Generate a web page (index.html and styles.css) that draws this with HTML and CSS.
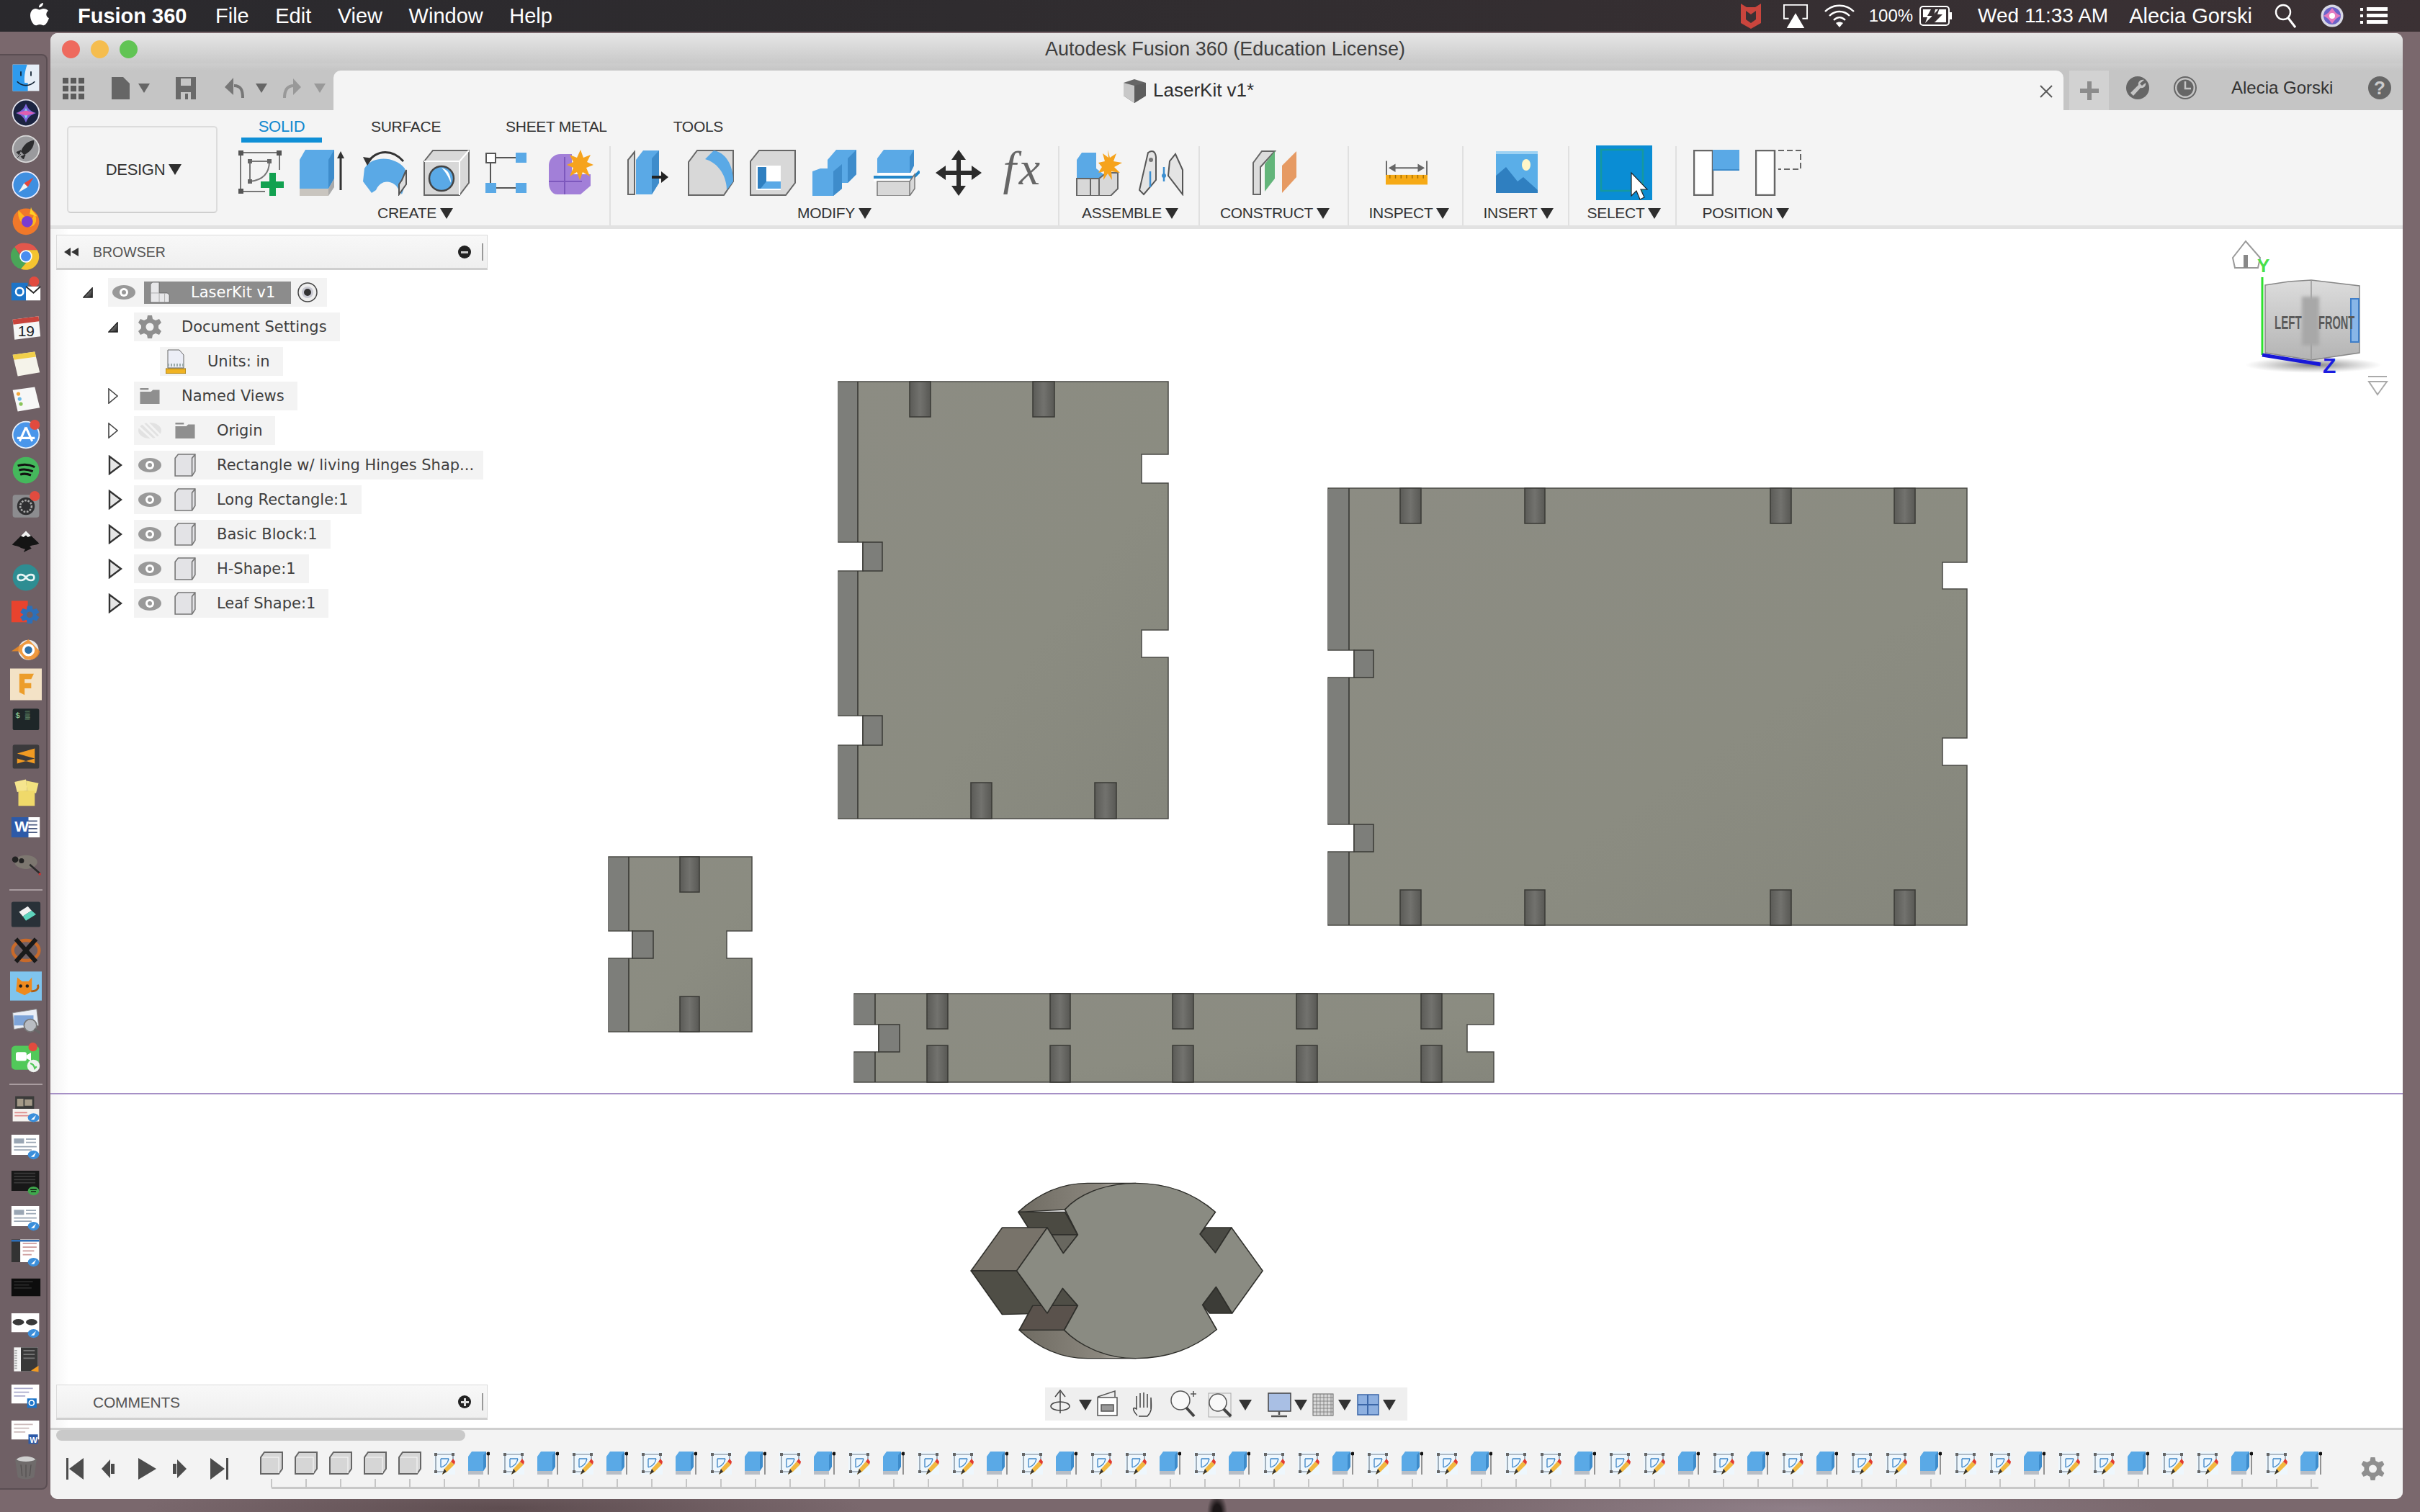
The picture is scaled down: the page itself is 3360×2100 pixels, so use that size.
FILE: index.html
```html
<!DOCTYPE html>
<html lang="en">
<head>
<meta charset="utf-8">
<title>Autodesk Fusion 360</title>
<link rel="stylesheet" href="styles.css">
</head>
<body>
<svg class="defs" aria-hidden="true">
<defs>
<linearGradient id="slotg" x1="0" x2="1" y1="0" y2="0"><stop offset="0" stop-color="#5b5b57"/><stop offset=".5" stop-color="#72726e"/><stop offset="1" stop-color="#585854"/></linearGradient>
<linearGradient id="capg" x1="0" x2="1" y1="0" y2="0"><stop offset="0" stop-color="#6f6b62"/><stop offset=".7" stop-color="#8b877e"/><stop offset="1" stop-color="#d8d6d0"/></linearGradient>
<linearGradient id="cubeg" x1="0" x2="0" y1="0" y2="1"><stop offset="0" stop-color="#dcdcdc"/><stop offset="1" stop-color="#b4b4b4"/></linearGradient>
<linearGradient id="bodyg" x1="0" x2="1" y1="0" y2="1"><stop offset="0" stop-color="#8c8c83"/><stop offset=".6" stop-color="#8b8c81"/><stop offset="1" stop-color="#85867c"/></linearGradient>
<radialGradient id="shadowg"><stop offset="0" stop-color="#555" stop-opacity=".75"/><stop offset="1" stop-color="#888" stop-opacity="0"/></radialGradient>
</defs>
<symbol id="r-sketch" viewBox="0 0 64 64"><path d="M4 4H58M4 4V58M4 58H38M58 4V28" stroke="#777" stroke-width="2" fill="none"/><path d="M1 1h7v7H1zM54 1h7v7h-7zM1 54h7v7H1z" fill="#555"/><path d="M17 16H44M17 16V44M44 16C44 32 36 42 17 44" stroke="#777" stroke-width="2" fill="none"/><path d="M14 13h6v6h-6zM41 13h6v6h-6zM14 41h6v6h-6z" fill="#666"/><path d="M44 32h9v12h11v9H53v11h-9V53H32v-9h12z" fill="#12a150"/></symbol>
<symbol id="r-extrude" viewBox="0 0 64 64"><path d="M0 54V14L8 0H48V40L40 54Z" fill="#5aa9e6"/><path d="M40 54V14L48 0V40Z" fill="#3e8ccb"/><path d="M0 54H40V64H0Z" fill="#c9c5bf"/><path d="M40 54l8-14v12l-8 12z" fill="#aaa"/><path d="M57 56V6" stroke="#333" stroke-width="3"/><path d="M52 12l5-10 5 10z" fill="#333"/></symbol>
<symbol id="r-revolve" viewBox="0 0 64 64"><path d="M4 26C14 8 46 8 60 26L62 44 56 62 48 50C40 42 26 42 20 56L14 60 2 44Z" fill="#5aa9e6"/><path d="M56 42L62 28V48L52 62V48Z" fill="#ddd" stroke="#555" stroke-width="2"/><path d="M8 18C22 -2 44 0 58 16" stroke="#333" stroke-width="3" fill="none"/><path d="M2 10l13 2-7 10z" fill="#333"/></symbol>
<symbol id="r-hole" viewBox="0 0 64 64"><path d="M1 63V16L13 1H63V46L50 63Z" fill="#d8d8d8" stroke="#666" stroke-width="2"/><path d="M1 16H50V63M50 16L63 1" fill="none" stroke="#fff" stroke-width="2"/><circle cx="25" cy="40" r="17" fill="#5aa9e6" stroke="#444" stroke-width="2.5"/><path d="M25 25C36 28 38 38 38 46 34 36 30 30 25 25" fill="#fff"/></symbol>
<symbol id="r-pattern" viewBox="0 0 64 64"><rect x="1" y="5" width="13" height="13" fill="#fff" stroke="#555" stroke-width="2"/><rect x="42" y="4" width="15" height="14" fill="#5aa9e6"/><rect x="0" y="46" width="15" height="14" fill="#5aa9e6"/><rect x="42" y="46" width="15" height="14" fill="#5aa9e6"/><path d="M14 11H42M7 18V46M15 53H42" stroke="#555" stroke-width="2"/></symbol>
<symbol id="r-form" viewBox="0 0 64 64"><path d="M2 22C2 12 10 6 18 6H34V34H60V50L46 62H14C6 62 2 54 2 46Z" fill="#a27fd8"/><path d="M2 44H48M24 10V62" stroke="#7d58bd" stroke-width="2"/><path d="M46 0l4 11 10-4-5 10 9 4-10 4 5 12-10-6-4 11-4-11-10 6 5-12-9-4 9-4-5-10 10 4z" fill="#f6a31c"/></symbol>
<symbol id="r-press" viewBox="0 0 64 64"><path d="M12 3L3 14V62H12Z" fill="#dcdcdc" stroke="#666" stroke-width="2"/><path d="M14 62V14L24 1H46V46L36 62Z" fill="#5aa9e6"/><path d="M36 62V12L46 1V46Z" fill="#3e8ccb"/><path d="M36 38H54" stroke="#222" stroke-width="4"/><path d="M49 30l10 8-10 8z" fill="#222"/></symbol>
<symbol id="r-fillet" viewBox="0 0 64 64"><path d="M1 63V17L13 1H63V44L50 63Z" fill="#d8d8d8" stroke="#666" stroke-width="2"/><path d="M24 13L36 1C52 4 63 20 63 44L54 56C54 36 42 18 24 13Z" fill="#5aa9e6"/></symbol>
<symbol id="r-shell" viewBox="0 0 64 64"><path d="M1 63V16L13 1H63V46L50 63Z" fill="#d8d8d8" stroke="#666" stroke-width="2"/><rect x="9" y="22" width="34" height="34" fill="#fff"/><path d="M11 24h12v20h20v10H11z" fill="#2f7fc0"/><path d="M23 44h20v10H15z" fill="#5aa9e6"/></symbol>
<symbol id="r-combine" viewBox="0 0 64 64"><path d="M22 26V14L34 0H62V34L50 46H42V54L30 64H1V30L12 26Z" fill="#5aa9e6"/><path d="M50 46V12L62 0V34ZM30 64V30L42 20V54Z" fill="#3e8ccb"/></symbol>
<symbol id="r-offset" viewBox="0 0 64 64"><path d="M5 32V12L14 0H56V22L50 34Z" fill="#5aa9e6"/><path d="M50 34V10L56 0V22Z" fill="#3e8ccb"/><path d="M0 42L8 32H64V34L54 44H0Z" fill="#fff"/><path d="M0 38H56L64 30" stroke="#2487c9" stroke-width="4" fill="none"/><path d="M5 64V44H50V64ZM50 64V44L57 34V54Z" fill="#d8d8d8" stroke="#777" stroke-width="1.5"/></symbol>
<symbol id="r-move" viewBox="0 0 64 64"><path d="M32 8V56M8 32H56" stroke="#2b2b2b" stroke-width="6"/><path d="M32 0l10 14H22zM32 64l10-14H22zM0 32l14-10v20zM64 32l-14-10v20z" fill="#2b2b2b"/></symbol>
<symbol id="r-newc" viewBox="0 0 64 64"><path d="M1 32V14L8 4H28V26L38 34V64H1Z" fill="#5aa9e6"/><path d="M1 40H32V64H1ZM32 40l10-8h16V54L48 64H32Z" fill="#d8d8d8" stroke="#666" stroke-width="2"/><path d="M20 64V40" stroke="#666" stroke-width="2"/><path d="M44 0l3 11 9-6-4 11 12 2-11 6 8 8-12-2 1 12-6-9-6 9 1-12-8 2 5-8-5-6 9-2-3-11 8 6z" fill="#f6a31c"/></symbol>
<symbol id="r-joint" viewBox="0 0 64 64"><path d="M2 56L14 4C20 0 24 2 25 10V42L8 62Z" fill="#e4e4e4" stroke="#555" stroke-width="2"/><path d="M42 36L62 62V28L52 6 44 16Z" fill="#e4e4e4" stroke="#555" stroke-width="2"/><circle cx="18" cy="14" r="3" fill="#777"/><path d="M17 30V52M36 24V44" stroke="#3b8ed0" stroke-width="2.5"/><circle cx="36" cy="36" r="3" fill="#3b8ed0"/></symbol>
<symbol id="r-construct" viewBox="0 0 64 64"><path d="M2 62V18L14 2H32L12 24V62Z" fill="#dcdcdc" stroke="#666" stroke-width="2"/><path d="M18 58V20L32 2V40Z" fill="#63b57a"/><path d="M42 60V22L62 2V38Z" fill="#e69a63"/></symbol>
<symbol id="r-inspect" viewBox="0 0 60 34"><path d="M1 0V22M59 0V22M6 10H54" stroke="#666" stroke-width="2"/><path d="M4 10l10-6v12zM56 10l-10-6v12z" fill="#666"/><rect x="0" y="20" width="60" height="14" fill="#f6aa16"/><path d="M6 20v5M14 20v5M22 20v5M30 20v5M38 20v5M46 20v5M54 20v5" stroke="#a36e00" stroke-width="1.5"/></symbol>
<symbol id="r-insert" viewBox="0 0 58 58"><rect width="58" height="58" fill="#5aaee8"/><rect width="58" height="4" fill="#9ed2f3"/><ellipse cx="42" cy="19" rx="6" ry="8" fill="#fff6c8"/><path d="M0 58V34L14 22 30 42 38 36 58 54V58Z" fill="#2f7fc0"/></symbol>
<symbol id="r-select" viewBox="0 0 78 76"><rect width="78" height="76" fill="#0a8dd4"/><rect x="7" y="6" width="58" height="57" fill="none" stroke="#15999f" stroke-width="2.5"/><path d="M49 38V70L56 63 61 75 67 72 62 61H71Z" fill="#fff" stroke="#222" stroke-width="1.2"/></symbol>
<symbol id="r-pos1" viewBox="0 0 64 64"><rect x="1" y="1" width="26" height="62" fill="#fff" stroke="#666" stroke-width="2.5"/><rect x="27" y="0" width="37" height="28" fill="#5aa9e6"/><path d="M27 28H64" stroke="#3e8ccb" stroke-width="2"/></symbol>
<symbol id="r-pos2" viewBox="0 0 64 64"><rect x="1" y="1" width="26" height="62" fill="#fff" stroke="#666" stroke-width="2.5"/><path d="M32 1H63V27H32" fill="none" stroke="#666" stroke-width="2" stroke-dasharray="8 4"/></symbol>
<symbol id="b-eye" viewBox="0 0 32 20"><ellipse cx="16" cy="10" rx="16" ry="10" fill="#999"/><circle cx="16" cy="10" r="6" fill="#fff"/><circle cx="16" cy="10" r="3" fill="#999"/></symbol>
<symbol id="b-eyeoff" viewBox="0 0 32 28"><ellipse cx="16" cy="14" rx="16" ry="11" fill="#e2e2e2"/><path d="M4 2L28 26M0 8L22 28M10 0L32 22" stroke="#f4f4f4" stroke-width="3"/></symbol>
<symbol id="b-gear" viewBox="0 0 32 32"><path d="M13 0h6l1 5 4 2 5-2 3 5-4 4v4l4 4-3 5-5-2-4 2-1 5h-6l-1-5-4-2-5 2-3-5 4-4v-4L0 10l3-5 5 2 4-2z" fill="#8f8f8f"/><circle cx="16" cy="16" r="5.5" fill="#f3f3f3"/></symbol>
<symbol id="b-folder" viewBox="0 0 32 26"><path d="M0 0h14v3H0zM0 6h18l3-3h11v23H0z" fill="#8f8f8f"/></symbol>
<symbol id="b-cube" viewBox="0 0 28 30"><path d="M1 29V6L5 1H27V23L23 29Z" fill="#e3e3e6" stroke="#777" stroke-width="1.5"/><path d="M23 29V6L27 1" fill="none" stroke="#777" stroke-width="1.5"/></symbol>
<symbol id="b-open" viewBox="0 0 16 16"><defs><linearGradient id="og" x1="0" x2="1" y1="0" y2="1"><stop offset="0" stop-color="#bbb"/><stop offset="1" stop-color="#222"/></linearGradient></defs><path d="M1 15L14 1V15Z" fill="url(#og)" stroke="#222" stroke-width="1.5"/></symbol>
<symbol id="b-closed" viewBox="0 0 14 22"><path d="M1 1L13 11 1 21Z" fill="#fff" stroke="#444" stroke-width="1.6"/></symbol>
<symbol id="b-closed2" viewBox="0 0 20 28"><path d="M2 2L18 14 2 26Z" fill="#e6e6e6" stroke="#333" stroke-width="2.4"/></symbol>
<symbol id="t-s" viewBox="0 0 30 32"><rect width="30" height="32" fill="#eef7fd"/><path d="M3 4H27V14M3 4V28H16" fill="none" stroke="#6f7f90" stroke-width="1.2"/><path d="M1 2h4v4H1zM25 2h4v4h-4zM1 26h4v4H1z" fill="#666"/><path d="M10 10H21M10 10V22M21 10C20 16 17 20 10 22" fill="none" stroke="#3d85c6" stroke-width="1.3"/><path d="M12 32l3-8 9-10 5 4-10 10z" fill="#f2b83f"/><path d="M24 14l3-4 3 4-1 4z" fill="#e23b2e"/><path d="M12 32l3-8 3 4z" fill="#333"/></symbol>
<symbol id="t-e" viewBox="0 0 30 32"><path d="M0 27V7L5 0H25V21L21 27Z" fill="#5aa9e6"/><path d="M21 27V5L25 0V21Z" fill="#3e8ccb"/><path d="M0 27H21V32H0Z" fill="#b8bec6"/><path d="M28 4V32" stroke="#333" stroke-width="1"/><circle cx="28" cy="3" r="2.5" fill="#111"/></symbol>
<symbol id="t-b" viewBox="0 0 32 32"><path d="M1 31V8L6 1H31V24L26 31Z" fill="#d6d6d6" stroke="#666" stroke-width="2"/><path d="M3 8H26V30" fill="none" stroke="#eee" stroke-width="1.5"/></symbol>
<symbol id="d-thumb" viewBox="0 0 48 48"><rect x="1" y="8" width="44" height="32" fill="#fff"/><path d="M5 14h16v8H5zM24 14h16v2H24zM24 19h16v2H24zM5 26h36v2H5zM5 31h28v2H5z" fill="#9aa6b4"/><ellipse cx="36" cy="40" rx="9" ry="7" fill="#3b8fdb"/><path d="M32 43l8-7-3 7z" fill="#fff"/></symbol>
<symbol id="d-thumbd" viewBox="0 0 48 48"><rect x="1" y="8" width="44" height="32" fill="#151515"/><path d="M5 12h34M5 17h34M5 22h34M5 27h34" stroke="#3a3a3a" stroke-width="2"/><ellipse cx="36" cy="40" rx="9" ry="7" fill="#3b8fdb"/><path d="M32 43l8-7-3 7z" fill="#fff"/></symbol>
</svg>

<div class="screen">
<header class="menubar">
  <svg class="apple" viewBox="0 0 26 32"><path d="M18 0c.3 3-2.6 6.6-6 6.3C11.700 3.500 14.700.3 18 0ZM25 11c-4 2.600-3.400 8.400 1 10.200-1.300 4-4.400 10.100-7.700 10.100-1.800 0-2.800-1.200-5-1.200s-3.300 1.200-5 1.200C3.500 31.300 0 22.800 0 17.500 0 11.700 3.500 8 7.300 8c2.300 0 3.900 1.400 5.500 1.400S16.100 8 18.500 8C21 8 23.500 9 25 11Z" fill="#fff"/></svg>
  <nav class="menus">
    <span class="menu-app">Fusion 360</span><span>File</span><span>Edit</span><span>View</span><span>Window</span><span>Help</span>
  </nav>
  <div class="status">
    <svg class="st-mc" viewBox="0 0 30 36"><path d="M1 1L9 6H21L29 1V28L15 36 1 28Z" fill="#c9453d"/><path d="M8 11L15 16 22 11V23L15 28 8 23Z" fill="#3b3134"/></svg>
    <svg class="st-air" viewBox="0 0 38 36"><path d="M9 22H2V2H36V22H29" fill="none" stroke="#fff" stroke-width="2"/><path d="M19 14L32 36H6Z" fill="#fff"/></svg>
    <svg class="st-wifi" viewBox="0 0 42 32"><path d="M1 10C12 -1 30 -1 41 10M7 16C15 8 27 8 35 16M13 22C18 17 24 17 29 22" fill="none" stroke="#fff" stroke-width="2.4"/><path d="M21 32l-5-6c3-2 7-2 10 0z" fill="#fff"/></svg>
    <span class="st-pct">100%</span>
    <svg class="st-bat" viewBox="0 0 46 28"><rect x="1" y="1" width="40" height="26" rx="4" fill="none" stroke="#fff" stroke-width="2"/><rect x="42" y="9" width="3" height="10" fill="#fff"/><path d="M5 5H16L11 14H18L8 24 11 16H5ZM22 5H37V23H20L27 14H20Z" fill="#fff"/><path d="M28 3L17 15H24L19 25 32 12H25Z" fill="#3a3134"/></svg>
    <span class="st-time">Wed 11:33 AM</span>
    <span class="st-user">Alecia Gorski</span>
    <svg class="st-search" viewBox="0 0 30 34"><circle cx="12" cy="12" r="10" fill="none" stroke="#fff" stroke-width="2.4"/><path d="M19 20L29 33" stroke="#fff" stroke-width="3"/></svg>
    <svg class="st-siri" viewBox="0 0 32 32"><circle cx="16" cy="16" r="15.500" fill="#d8d8e4"/><circle cx="16" cy="16" r="12" fill="#6b63c9"/><path d="M16 5C20 10 20 12 28 16 20 20 20 22 16 27 12 22 12 20 4 16 12 12 12 10 16 5Z" fill="#e57bc0"/><circle cx="16" cy="16" r="4" fill="#fff"/></svg>
    <svg class="st-list" viewBox="0 0 38 26"><path d="M0 2h4v4H0zM0 11h4v4H0zM0 20h4v4H0zM9 1h29v5H9zM9 10h29v5H9zM9 19h29v5H9z" fill="#fff"/></svg>
  </div>
</header>

<div class="desk">
  <aside class="dock">
    <div class="di"><i class="dot"></i><svg viewBox="0 0 48 48"><rect x="3" y="3" width="42" height="42" fill="#e6eef7"/><path d="M3 3H26C22 14 21 24 22 32H27V45H3Z" fill="#2e9bee"/><path d="M16 14v7M32 14v7" stroke="#123" stroke-width="2"/><path d="M10 30C18 38 30 38 38 30" fill="none" stroke="#123" stroke-width="2"/></svg></div>
    <div class="di"><svg viewBox="0 0 48 48"><circle cx="24" cy="24" r="21" fill="#1b2340" stroke="#e5e5ee" stroke-width="2"/><path d="M24 9C28 18 30 20 40 24 30 28 28 30 24 39 20 30 18 28 8 24 18 20 20 18 24 9Z" fill="#7a62d8"/><path d="M24 16L28 24 24 33 20 24Z" fill="#7fd8f5"/><path d="M10 24L24 20 38 24 24 28Z" fill="#e05fb0"/></svg></div>
    <div class="di"><svg viewBox="0 0 48 48"><circle cx="24" cy="24" r="21" fill="#9a9a9d" stroke="#d9d9d9" stroke-width="2"/><path d="M37 10C28 11 20 17 16 28L21 33C31 29 37 21 37 10Z" fill="#2c2c2e"/><path d="M16 26L9 29 13 33ZM23 33L20 40 16 36ZM16 32L10 38" fill="#2c2c2e" stroke="#2c2c2e"/></svg></div>
    <div class="di"><i class="dot"></i><svg viewBox="0 0 48 48"><circle cx="24" cy="24" r="21" fill="#3f8fe0" stroke="#eef" stroke-width="2"/><path d="M36 12L21 21 27 27Z" fill="#e4463b"/><path d="M12 36L21 21 27 27Z" fill="#f2f2f2"/></svg></div>
    <div class="di"><svg viewBox="0 0 48 48"><circle cx="24" cy="26" r="21" fill="#f0782a"/><path d="M12 8C10 20 16 32 30 34 40 34 44 22 36 10 38 20 32 26 26 22Z" fill="#ffb51e"/><circle cx="26" cy="26" r="9" fill="#7a3bd0"/><path d="M32 3C34 10 38 12 42 18L30 14Z" fill="#ffcf26"/></svg></div>
    <div class="di"><svg viewBox="0 0 48 48"><path d="M24 3A21 21 0 0 1 42 14H24A10 10 0 0 0 14.500 21L6 9A21 21 0 0 1 24 3Z" fill="#e2574c"/><path d="M6 9L15 24A10 10 0 0 0 25 34L16 44A21 21 0 0 1 6 9Z" fill="#4aa658"/><path d="M42 14A21 21 0 0 1 16 44L28 30A10 10 0 0 0 24 14Z" fill="#f4c430"/><circle cx="24" cy="24" r="9" fill="#4a8df0" stroke="#fff" stroke-width="2"/></svg></div>
    <div class="di"><i class="dot"></i><svg viewBox="0 0 48 48"><rect x="1" y="10" width="26" height="28" fill="#1c74c8"/><path d="M24 16H47V38H24Z" fill="#fff"/><path d="M24 16L36 26 47 16" fill="none" stroke="#222" stroke-width="2"/><circle cx="14" cy="24" r="6" fill="none" stroke="#fff" stroke-width="3"/><circle cx="37" cy="8" r="8" fill="#e14b3f"/></svg></div>
    <div class="di"><svg viewBox="0 0 48 48"><path d="M3 11L44 6 47 38 6 43Z" fill="#f6f6f6"/><path d="M3 11L44 6 45 14 4 19Z" fill="#c8443c"/><text class="d-cal" x="11" y="38">19</text></svg></div>
    <div class="di"><svg viewBox="0 0 48 48"><path d="M3 10L38 5 46 38 11 44Z" fill="#f5f3ea"/><path d="M3 10L38 5 40 13 5 18Z" fill="#f1cf4a"/></svg></div>
    <div class="di"><svg viewBox="0 0 48 48"><path d="M3 10L38 5 46 38 11 44Z" fill="#f7f7f7"/><circle cx="12" cy="16" r="3" fill="#f1a73b"/><circle cx="14" cy="24" r="3" fill="#6cb9e8"/><circle cx="16" cy="32" r="3" fill="#8ac45a"/></svg></div>
    <div class="di"><svg viewBox="0 0 48 48"><circle cx="24" cy="24" r="21" fill="#4a96ea" stroke="#e8f0fa" stroke-width="2"/><path d="M24 12L34 34M24 12L14 34M10 29H38" stroke="#fff" stroke-width="3.500" fill="none"/><circle cx="38" cy="8" r="8" fill="#e14b3f"/></svg></div>
    <div class="di"><i class="dot"></i><svg viewBox="0 0 48 48"><circle cx="24" cy="24" r="21" fill="#45b85c"/><path d="M11 17C20 14 30 15 38 19M13 24C20 22 28 23 35 26M15 31C21 29 27 30 32 32" fill="none" stroke="#121212" stroke-width="3.500"/></svg></div>
    <div class="di"><svg viewBox="0 0 48 48"><rect x="3" y="6" width="42" height="36" rx="4" fill="#8c8c8f"/><circle cx="24" cy="24" r="14" fill="#2f2f31"/><circle cx="24" cy="24" r="9" fill="none" stroke="#aaa" stroke-width="3" stroke-dasharray="3 2"/><circle cx="38" cy="8" r="8" fill="#e14b3f"/></svg></div>
    <div class="di"><svg viewBox="0 0 48 48"><path d="M24 6L45 26C38 30 36 27 30 31L33 34 20 40 23 35 16 33C12 30 6 30 2 28Z" fill="#141414"/><path d="M24 6L32 14 27 16 24 13 20 16 16 14Z" fill="#f0f0f0"/></svg></div>
    <div class="di"><svg viewBox="0 0 48 48"><circle cx="24" cy="24" r="21" fill="#2e8d92"/><path d="M24 24C20 18 11 18 11 24S20 30 24 24 37 18 37 24 28 30 24 24Z" fill="none" stroke="#e6f4f4" stroke-width="3"/></svg></div>
    <div class="di"><svg viewBox="0 0 48 48"><rect x="1" y="4" width="26" height="34" fill="#e8432e"/><path d="M26 12h8l1 6 6-2 4 6-5 4 5 4-4 6-6-2-1 6h-8l-1-6-6 2-4-6 5-4-5-4 4-6 6 2z" fill="#2d6fb8"/><circle cx="30" cy="26" r="5" fill="#6e5f64"/></svg></div>
    <div class="di"><svg viewBox="0 0 48 48"><circle cx="28" cy="26" r="16" fill="#e8e8e8"/><circle cx="28" cy="26" r="7" fill="#3573a8"/><path d="M1 28L28 9 46 28C44 40 32 44 22 40L12 28Z" fill="#ee8b22" fill-opacity=".85"/><circle cx="28" cy="26" r="10" fill="#fff"/><circle cx="28" cy="26" r="6" fill="#2c6fa6"/></svg></div>
    <div class="di di-lg"><i class="dot"></i><svg viewBox="0 0 48 48"><rect width="48" height="48" fill="#f3e2c6"/><path d="M14 8H36L32 16H22V22H32V30H22V40L14 36Z" fill="#ec9d2a"/></svg></div>
    <div class="di"><i class="dot"></i><svg viewBox="0 0 48 48"><rect x="3" y="6" width="42" height="34" rx="3" fill="#1e2628"/><text class="d-term" x="7" y="20">$ ▒</text></svg></div>
    <div class="di"><i class="dot"></i><svg viewBox="0 0 48 48"><rect x="3" y="6" width="42" height="38" rx="3" fill="#3b3a3c"/><path d="M10 20L38 12V20L10 28ZM10 28L38 36V28L10 20ZM10 28L38 20V28L10 36Z" fill="#f09a22"/></svg></div>
    <div class="di"><svg viewBox="0 0 48 48"><path d="M6 8L24 4 26 22 10 24Z" fill="#f5e58e"/><path d="M24 6L44 10 40 26 26 22Z" fill="#f2e27f"/><path d="M12 22H38V46H12Z" fill="#efd96a"/></svg></div>
    <div class="di"><i class="dot"></i><svg viewBox="0 0 48 48"><rect x="20" y="8" width="26" height="32" fill="#fff"/><path d="M26 14h16M26 20h16M26 26h16M26 32h16" stroke="#4a5a80" stroke-width="2"/><rect x="1" y="8" width="27" height="32" fill="#2d5aa8"/><text class="d-word" x="6" y="31">W</text></svg></div>
    <div class="di"><svg viewBox="0 0 48 48"><ellipse cx="24" cy="22" rx="18" ry="11" fill="#7d7770"/><circle cx="7" cy="18" r="5" fill="#222"/><circle cx="17" cy="20" r="4" fill="#222"/><path d="M30 26L46 40" stroke="#2b2b2b" stroke-width="3"/><circle cx="46" cy="41" r="2" fill="#c33"/></svg></div>
    <div class="dock-sep"></div>
    <div class="di"><svg viewBox="0 0 48 48"><rect x="1" y="4" width="46" height="40" rx="3" fill="#293138"/><path d="M13 20L27 11 33 18 19 27Z" fill="#f2f2f2"/><path d="M19 27L33 18 40 24 24 34Z" fill="#5ed4bd"/></svg></div>
    <div class="di"><i class="dot"></i><svg viewBox="0 0 48 48"><ellipse cx="24" cy="24" rx="21" ry="16" fill="none" stroke="#c86a2a" stroke-width="5"/><path d="M8 6L40 42M40 6L8 42" stroke="#1a1a1a" stroke-width="7"/></svg></div>
    <div class="di di-lg"><svg viewBox="0 0 48 48"><rect y="2" width="48" height="44" fill="#7fc4ee"/><path d="M11 11L18 17H28L33 11V32L22 38 9 32Z" fill="#ee8a1e"/><path d="M32 32C40 32 44 28 42 22" fill="none" stroke="#b05e10" stroke-width="3"/><circle cx="16" cy="24" r="2.500" fill="#222"/><circle cx="26" cy="24" r="2.500" fill="#222"/></svg></div>
    <div class="di"><svg viewBox="0 0 48 48"><path d="M3 10L41 4 44 30 5 36Z" fill="#eaeef6" stroke="#888"/><path d="M5 14H36V30H5Z" fill="#7ea4d8"/><circle cx="31" cy="30" r="10" fill="#b9bcc2" stroke="#777" stroke-width="2"/><path d="M37 36L47 42" stroke="#666" stroke-width="4"/></svg></div>
    <div class="di"><svg viewBox="0 0 48 48"><rect x="1" y="5" width="44" height="38" rx="6" fill="#52c95a"/><rect x="8" y="15" width="17" height="14" rx="3" fill="#fff"/><path d="M25 20l7-4v13l-7-4z" fill="#fff"/><circle cx="36" cy="37" r="10" fill="#eef3ef"/><path d="M31 33c4 1 6 4 7 8l3-3" fill="none" stroke="#52c95a" stroke-width="2.500"/><circle cx="35" cy="7" r="7" fill="#e14b3f"/></svg></div>
    <div class="dock-sep"></div>
    <div class="di"><svg viewBox="0 0 48 48"><rect x="7" y="4" width="30" height="20" fill="#3b3b3a"/><path d="M10 8h10v12H10zM22 9h12v10H22z" fill="#a49a88"/><rect x="3" y="24" width="42" height="20" fill="#f4f1ee"/><path d="M6 30h20M6 35h24" stroke="#d88" stroke-width="2"/><ellipse cx="36" cy="38" rx="9" ry="7" fill="#3b8fdb"/><path d="M32 41l8-7-3 7z" fill="#fff"/></svg></div>
    <div class="di"><svg><use href="#d-thumb"/></svg></div>
    <div class="di"><svg viewBox="0 0 48 48"><rect x="1" y="8" width="44" height="32" fill="#181818"/><path d="M5 12h34M5 17h34M5 22h34M5 27h34" stroke="#3a3a3a" stroke-width="2"/><ellipse cx="36" cy="40" rx="9" ry="7" fill="#3fa84d"/><path d="M31 38h10M32 41h8" stroke="#111" stroke-width="1.500"/></svg></div>
    <div class="di"><svg><use href="#d-thumb"/></svg></div>
    <div class="di"><svg viewBox="0 0 48 48"><rect x="1" y="4" width="14" height="36" fill="#333"/><rect x="15" y="4" width="30" height="36" fill="#fff"/><path d="M19 10h22M19 16h22M19 22h18M19 28h14" stroke="#c99" stroke-width="2"/><path d="M1 6h44" stroke="#2d6fb8" stroke-width="3"/><ellipse cx="36" cy="40" rx="9" ry="7" fill="#3b8fdb"/><path d="M32 43l8-7-3 7z" fill="#fff"/></svg></div>
    <div class="di"><svg viewBox="0 0 48 48"><rect x="1" y="10" width="46" height="28" fill="#0d0d0d"/><path d="M5 15h30M5 20h24M5 25h28" stroke="#2a2a2a" stroke-width="2"/></svg></div>
    <div class="di"><svg viewBox="0 0 48 48"><rect x="1" y="8" width="44" height="30" fill="#fff"/><ellipse cx="12" cy="22" rx="9" ry="5" fill="#3a3a3a"/><ellipse cx="33" cy="22" rx="9" ry="5" fill="#3a3a3a"/><ellipse cx="36" cy="40" rx="9" ry="7" fill="#3b8fdb"/><path d="M32 43l8-7-3 7z" fill="#fff"/></svg></div>
    <div class="di"><svg viewBox="0 0 48 48"><rect x="5" y="5" width="38" height="38" fill="#f4f4f4"/><rect x="16" y="5" width="27" height="38" fill="#383838"/><path d="M20 10h18M20 16h18M20 22h18" stroke="#777" stroke-width="2"/><path d="M8 9v30" stroke="#aaa" stroke-width="4" stroke-dasharray="2 2"/><path d="M32 42L44 34V44Z" fill="#f09a22"/></svg></div>
    <div class="di"><svg viewBox="0 0 48 48"><rect x="1" y="8" width="44" height="30" fill="#fff"/><path d="M5 14h30M5 20h24M5 26h18" stroke="#aac" stroke-width="2"/><rect x="26" y="30" width="15" height="15" fill="#1c74c8"/><circle cx="33" cy="37" r="4" fill="none" stroke="#fff" stroke-width="2"/></svg></div>
    <div class="di"><svg viewBox="0 0 48 48"><rect x="1" y="8" width="44" height="30" fill="#fff"/><path d="M5 14h30M5 20h24M5 26h18" stroke="#cbb" stroke-width="2"/><rect x="28" y="30" width="15" height="15" fill="#2d5aa8"/><text class="d-wordsm" x="30" y="43">W</text></svg></div>
    <div class="di"><svg viewBox="0 0 48 48"><path d="M7 14C12 8 36 8 41 14L37 42C30 46 18 46 11 42Z" fill="#6f6b6b"/><path d="M9 14C14 7 34 7 39 14 32 18 16 18 9 14Z" fill="#cfcfcf"/><path d="M16 22L18 40M24 22V42M32 22L30 40" stroke="#565252" stroke-width="1.500"/></svg></div>
  </aside>

  <main class="window">
    <div class="titlebar">
      <div class="lights"><i class="l-r"></i><i class="l-y"></i><i class="l-g"></i></div>
      <span class="title">Autodesk Fusion 360 (Education License)</span>
    </div>
    <div class="tabbar">
      <svg class="tools-left" viewBox="0 0 393 55"><path d="M17 10h8v8h-8zM28 10h8v8h-8zM39 10h8v8h-8zM17 21h8v8h-8zM28 21h8v8h-8zM39 21h8v8h-8zM17 32h8v8h-8zM28 32h8v8h-8zM39 32h8v8h-8z" fill="#5b5b5b"/><path d="M85 9H101L110 18V40H85Z" fill="#666"/><path d="M122 18h16l-8 13z" fill="#666"/><path d="M174 9H202V40H174Z" fill="#6a6a6a"/><path d="M181 11h14v10h-14zM181 30h14v10h-14z" fill="#c5c5c5"/><path d="M187 32h4v8h-4z" fill="#666"/><path d="M255 21C265 21 267 28 267 38" fill="none" stroke="#777" stroke-width="4"/><path d="M242 23L254 10V34Z" fill="#777"/><path d="M285 18h16l-8 13z" fill="#666"/><path d="M325 38C325 28 328 21 338 21" fill="none" stroke="#999" stroke-width="4"/><path d="M348 23L337 11V34Z" fill="#999"/><path d="M366 18h16l-8 13z" fill="#999"/></svg>
      <div class="doc-tab">
        <svg class="tab-cube" viewBox="0 0 33 34"><path d="M16 1L32 6V24L16 34 1 24V6Z" fill="#666"/><path d="M1 6L16 10V34L1 24Z" fill="#c8c8c8"/><path d="M16 10L32 6V24L16 34Z" fill="#5d5d5d"/></svg>
        <span class="tab-name">LaserKit v1*</span>
        <svg class="tab-x" viewBox="0 0 20 20"><path d="M2 2L18 18M18 2L2 18" stroke="#5b5b5b" stroke-width="2"/></svg>
      </div>
      <div class="tab-plus"><svg viewBox="0 0 26 26"><path d="M10 0h6v10h10v6H16v10h-6V16H0v-6h10z" fill="#8c8c8c"/></svg></div>
      <svg class="tb-ico tb-wrench" viewBox="0 0 32 32"><circle cx="16" cy="16" r="16" fill="#666"/><path d="M25 5c-5-1-9 3-8 7L6 23l4 4 10-11c5 1 8-3 7-7l-5 4-3-3z" fill="#c5c5c5"/></svg>
      <svg class="tb-ico tb-clock" viewBox="0 0 32 32"><circle cx="16" cy="16" r="15" fill="#c5c5c5" stroke="#666" stroke-width="2"/><circle cx="16" cy="16" r="11.500" fill="#666"/><path d="M16 7V17H24" fill="none" stroke="#c5c5c5" stroke-width="2.500"/></svg>
      <span class="tb-user">Alecia Gorski</span>
      <svg class="tb-ico tb-help" viewBox="0 0 32 32"><circle cx="16" cy="16" r="16" fill="#666"/><text class="help-q" x="16" y="25">?</text></svg>
    </div>

    <section class="ribbon">
      <div class="design"><span class="caret-label">DESIGN</span></div>
      <div class="rib-main">
        <div class="rib-tabs">
          <span class="rtab rtab-active">SOLID</span>
          <span class="rtab rtab-surface">SURFACE</span>
          <span class="rtab rtab-sheet">SHEET METAL</span>
          <span class="rtab rtab-tools">TOOLS</span>
        </div>
        <div class="rib-groups">
          <div class="grp g-create"><div class="g-icons"><svg><use href="#r-sketch"/></svg><svg><use href="#r-extrude"/></svg><svg><use href="#r-revolve"/></svg><svg><use href="#r-hole"/></svg><svg><use href="#r-pattern"/></svg><svg><use href="#r-form"/></svg></div><span class="caret-label">CREATE</span></div>
          <div class="grp g-modify"><div class="g-icons"><svg><use href="#r-press"/></svg><svg><use href="#r-fillet"/></svg><svg><use href="#r-shell"/></svg><svg><use href="#r-combine"/></svg><svg><use href="#r-offset"/></svg><svg><use href="#r-move"/></svg><span class="fx">fx</span></div><span class="caret-label">MODIFY</span></div>
          <div class="grp g-assemble"><div class="g-icons"><svg><use href="#r-newc"/></svg><svg><use href="#r-joint"/></svg></div><span class="caret-label">ASSEMBLE</span></div>
          <div class="grp g-construct"><div class="g-icons"><svg><use href="#r-construct"/></svg></div><span class="caret-label">CONSTRUCT</span></div>
          <div class="grp g-inspect"><div class="g-icons"><svg class="ic-insp"><use href="#r-inspect"/></svg></div><span class="caret-label">INSPECT</span></div>
          <div class="grp g-insert"><div class="g-icons"><svg class="ic-ins"><use href="#r-insert"/></svg></div><span class="caret-label">INSERT</span></div>
          <div class="grp g-select"><div class="g-icons"><svg class="ic-sel"><use href="#r-select"/></svg></div><span class="caret-label">SELECT</span></div>
          <div class="grp g-position"><div class="g-icons g-pos"><svg><use href="#r-pos1"/></svg><svg><use href="#r-pos2"/></svg></div><span class="caret-label">POSITION</span></div>
        </div>
      </div>
    </section>

    <section class="viewport">
      <svg class="canvas" viewBox="70 318 3266 1665">
        <!-- part 1 -->
        <path class="body" fill="url(#bodyg)" d="M1164 530H1622V631H1585V671H1622V875H1585V913H1622V1137H1164V1035H1198V994H1164V793H1198V753H1164Z"/>
        <path class="strip" d="M1164 531H1191V752H1164ZM1164 794H1191V993H1164ZM1164 1036H1191V1136H1164Z"/>
        <path class="edge" d="M1191 530V753M1191 793V994M1191 1035V1137"/>
        <path class="sq" d="M1198 753H1225V793H1198ZM1198 994H1225V1035H1198Z"/>
        <g fill="url(#slotg)" class="slots"><rect x="1263" y="530" width="29" height="49"/><rect x="1434" y="530" width="30" height="49"/><rect x="1348" y="1087" width="29" height="50"/><rect x="1520" y="1087" width="30" height="50"/></g>
        <!-- part 2 -->
        <path class="body" fill="url(#bodyg)" d="M1844 678H2731V781H2697V818H2731V1025H2697V1063H2731V1285H1844V1183H1880V1145H1844V941H1880V903H1844Z"/>
        <path class="strip" d="M1844 679H1873V902H1844ZM1844 942H1873V1144H1844ZM1844 1184H1873V1284H1844Z"/>
        <path class="edge" d="M1873 678V903M1873 941V1145M1873 1183V1285"/>
        <path class="sq" d="M1880 903H1907V941H1880ZM1880 1145H1907V1183H1880Z"/>
        <g fill="url(#slotg)" class="slots"><rect x="1944" y="678" width="29" height="49"/><rect x="2117" y="678" width="28" height="49"/><rect x="2458" y="678" width="29" height="49"/><rect x="2630" y="678" width="29" height="49"/><rect x="1944" y="1236" width="29" height="49"/><rect x="2117" y="1236" width="28" height="49"/><rect x="2458" y="1236" width="29" height="49"/><rect x="2630" y="1236" width="29" height="49"/></g>
        <!-- part 3 -->
        <path class="body" fill="url(#bodyg)" d="M845 1190H1044V1293H1009V1331H1044V1433H845V1331H878V1293H845Z"/>
        <path class="strip" d="M845 1191H873V1292H845ZM845 1332H873V1432H845Z"/>
        <path class="edge" d="M873 1190V1293M873 1331V1433"/>
        <path class="sq" d="M878 1293H907V1331H878Z"/>
        <g fill="url(#slotg)" class="slots"><rect x="944" y="1190" width="27" height="49"/><rect x="944" y="1384" width="27" height="49"/></g>
        <!-- part 4 -->
        <path class="body" fill="url(#bodyg)" d="M1186 1380H2074V1423H2037V1461H2074V1503H1186V1461H1220V1423H1186Z"/>
        <path class="strip" d="M1186 1381H1215V1422H1186ZM1186 1462H1215V1502H1186Z"/>
        <path class="edge" d="M1215 1380V1423M1215 1461V1503"/>
        <path class="sq" d="M1220 1423H1249V1461H1220Z"/>
        <g fill="url(#slotg)" class="slots"><rect x="1287" y="1380" width="29" height="49"/><rect x="1458" y="1380" width="28" height="49"/><rect x="1628" y="1380" width="29" height="49"/><rect x="1800" y="1380" width="29" height="49"/><rect x="1973" y="1380" width="29" height="49"/><rect x="1287" y="1452" width="29" height="51"/><rect x="1458" y="1452" width="28" height="51"/><rect x="1628" y="1452" width="29" height="51"/><rect x="1800" y="1452" width="29" height="51"/><rect x="1973" y="1452" width="29" height="51"/></g>
        <!-- ground line -->
        <rect x="70" y="1518" width="3266" height="2" fill="#a690c6"/>
        <!-- leaf -->
        <g transform="translate(1300 1600) scale(.4464 .3333)" stroke="#2f2f2b" stroke-width="4" stroke-linejoin="round">
          <path d="M255 250C320 170 390 130 470 130H620C520 150 440 190 400 240Z" fill="url(#capg)"/>
          <path d="M255 250H400L440 345H300Z" fill="#4b4a42"/>
          <path d="M345 345H440L395 422Z" fill="#68675f"/>
          <path d="M205 315H345L250 495H108Z" fill="#78736a"/>
          <path d="M108 495H250L345 672 205 677Z" fill="#4f4e46"/>
          <path d="M393 568L345 640H440Z" fill="#4f4e46"/>
          <path d="M300 640H440L398 742H258Z" fill="#5a524c"/>
          <path d="M258 742H398C440 800 520 840 620 860H470C390 860 320 820 258 742Z" fill="url(#capg)"/>
          <path d="M820 342L838 315H918L868 420Z" fill="#4a4a44"/>
          <path d="M870 562L920 672H850L828 637Z" fill="#3c3c37"/>
          <path d="M400 240C440 180 520 130 620 130 720 130 800 170 868 250L820 342 868 420 918 315 1015 495 920 672 870 562 828 637 872 740C800 820 720 860 620 860 520 860 440 800 398 742L440 640 393 568 345 672 250 495 345 315 395 422 440 345Z" fill="#8a8b82"/>
        </g>
        <!-- view cube -->
        <ellipse cx="3212" cy="507" rx="95" ry="11" fill="url(#shadowg)"/>
        <path d="M3100 358L3118 335 3138 358 3135 372H3103Z" fill="#fff" stroke="#999" stroke-width="2"/><path d="M3115 372V354H3121V372Z" fill="#888"/>
        <path d="M3145 396L3178 391 3209 389 3276 397V490L3209 500 3145 490Z" fill="url(#cubeg)" stroke="#888" stroke-width="1.500"/>
        <path d="M3209 389V500" stroke="#999" stroke-width="1.500"/>
        <rect class="cube-mid" x="3196" y="412" width="24" height="68" fill="#a8a8a8"/>
        <rect x="3264" y="415" width="11" height="60" fill="#88b6e8" stroke="#3f7ec8" stroke-width="2"/>
        <path d="M3141 385V493" stroke="#2ee02e" stroke-width="3"/>
        <path d="M3141 493L3222 506" stroke="#1818d8" stroke-width="5"/>
        <text class="cube-y" x="3134" y="378">Y</text>
        <text class="cube-z" x="3225" y="518">Z</text>
        <text class="cube-t" transform="translate(3158 457) scale(.58 1)">LEFT</text>
        <text class="cube-t" transform="translate(3219 457) scale(.56 1)">FRONT</text>
        <path d="M3288 523H3314M3289 530H3314L3301 548Z" fill="#fff" stroke="#aaa" stroke-width="2"/>
      </svg>

      <div class="panel browser">
        <div class="panel-head">
          <svg class="ph-arrows" viewBox="0 0 20 14"><path d="M0 7L9 1V13ZM10 7L20 1V13Z" fill="#333"/></svg>
          <span class="ph-title">BROWSER</span>
          <svg class="ph-btn" viewBox="0 0 18 18"><circle cx="9" cy="9" r="9" fill="#222"/><path d="M4 8h10v3H4z" fill="#ccc"/></svg>
          <i class="ph-bar"></i>
        </div>
        <ul class="tree">
          <li class="row d0"><svg class="tw tw-o"><use href="#b-open"/></svg><div class="pill pill-root"><svg class="ic"><use href="#b-eye"/></svg><div class="sel"><svg class="sel-ic" viewBox="0 0 30 32"><path d="M1 31V4L4 1H14V17H26L29 20V31Z" fill="#e8e8ea" stroke="#666"/><path d="M14 31V17M1 17H14M22 17V31" stroke="#aaa"/></svg><span>LaserKit v1</span></div><svg class="radio" viewBox="0 0 28 28"><circle cx="14" cy="14" r="13" fill="#eee" stroke="#444" stroke-width="1.500"/><circle cx="14" cy="14" r="8" fill="#c9c9d2"/><circle cx="14" cy="14" r="5" fill="#333"/></svg></div></li>
          <li class="row d1"><svg class="tw tw-o"><use href="#b-open"/></svg><div class="pill"><svg class="ic ic-tall"><use href="#b-gear"/></svg><span class="t">Document Settings</span></div></li>
          <li class="row d2"><div class="pill pill-units"><svg class="ic-unit" viewBox="0 0 28 34"><path d="M3 1H19L25 8V26H3Z" fill="#eceef7" stroke="#666"/><path d="M3 22h22" stroke="#9aa" stroke-dasharray="2 2" stroke-width="4"/><rect y="27" width="28" height="7" fill="#f0b323" stroke="#8a6a10"/></svg><span class="t">Units: in</span></div></li>
          <li class="row d1"><svg class="tw tw-c"><use href="#b-closed"/></svg><div class="pill"><svg class="ic"><use href="#b-folder"/></svg><span class="t">Named Views</span></div></li>
          <li class="row d1"><svg class="tw tw-c"><use href="#b-closed"/></svg><div class="pill"><svg class="ic ic-tall"><use href="#b-eyeoff"/></svg><svg class="ic"><use href="#b-folder"/></svg><span class="t">Origin</span></div></li>
          <li class="row d1"><svg class="tw tw-b"><use href="#b-closed2"/></svg><div class="pill pill-long"><svg class="ic"><use href="#b-eye"/></svg><svg class="ic ic-tall"><use href="#b-cube"/></svg><span class="t">Rectangle w/ living Hinges Shap...</span></div></li>
          <li class="row d1"><svg class="tw tw-b"><use href="#b-closed2"/></svg><div class="pill"><svg class="ic"><use href="#b-eye"/></svg><svg class="ic ic-tall"><use href="#b-cube"/></svg><span class="t">Long Rectangle:1</span></div></li>
          <li class="row d1"><svg class="tw tw-b"><use href="#b-closed2"/></svg><div class="pill"><svg class="ic"><use href="#b-eye"/></svg><svg class="ic ic-tall"><use href="#b-cube"/></svg><span class="t">Basic Block:1</span></div></li>
          <li class="row d1"><svg class="tw tw-b"><use href="#b-closed2"/></svg><div class="pill"><svg class="ic"><use href="#b-eye"/></svg><svg class="ic ic-tall"><use href="#b-cube"/></svg><span class="t">H-Shape:1</span></div></li>
          <li class="row d1"><svg class="tw tw-b"><use href="#b-closed2"/></svg><div class="pill"><svg class="ic"><use href="#b-eye"/></svg><svg class="ic ic-tall"><use href="#b-cube"/></svg><span class="t">Leaf Shape:1</span></div></li>
        </ul>
      </div>

      <div class="panel comments">
        <div class="panel-head">
          <span class="ph-title ph-comments">COMMENTS</span>
          <svg class="ph-btn" viewBox="0 0 18 18"><circle cx="9" cy="9" r="9" fill="#222"/><path d="M4 8h4V4h3v4h4v3h-4v4H8v-4H4z" fill="#ddd"/></svg>
          <i class="ph-bar"></i>
        </div>
      </div>

      <div class="navbar">
        <svg viewBox="0 0 503 46">
          <g fill="none" stroke="#444" stroke-width="1.500"><path d="M21 36V6M14 13l7-9 7 9"/><ellipse cx="21" cy="26" rx="13" ry="6"/></g>
          <path d="M47 17h18l-9 15z" fill="#333"/>
          <g fill="none" stroke="#555" stroke-width="1.500"><rect x="73" y="14" width="27" height="25" fill="#fff"/><rect x="78" y="24" width="17" height="9" fill="#999"/><path d="M73 13l24-8v8"/></g>
          <path d="M128 39C120 30 122 26 127 30V12M132 28V8M137 28V7M142 28V9M147 30V14C148 30 148 34 142 40H130" fill="none" stroke="#444" stroke-width="1.500"/>
          <circle cx="188" cy="18" r="13" fill="#f8f8f8" stroke="#555" stroke-width="1.500"/><path d="M196 28L207 40" stroke="#444" stroke-width="4"/><path d="M202 9h8M206 5v8" stroke="#555" stroke-width="1.500"/>
          <rect x="227" y="8" width="31" height="33" fill="none" stroke="#aaa"/><circle cx="240" cy="21" r="12" fill="#f8f8f8" stroke="#555" stroke-width="1.500"/><path d="M248 30L258 40" stroke="#444" stroke-width="4"/>
          <path d="M269 17h18l-9 15z" fill="#333"/>
          <rect x="310" y="8" width="31" height="25" fill="#a9bfe4" stroke="#444" stroke-width="1.500"/><path d="M325 33v5M314 40h22" stroke="#555" stroke-width="2.500"/>
          <path d="M346 17h18l-9 15z" fill="#333"/>
          <rect x="372" y="9" width="28" height="30" fill="#d8d8d8" stroke="#666"/><path d="M377 9v30M382 9v30M387 9v30M392 9v30M397 9v30M372 14h28M372 19h28M372 24h28M372 29h28M372 34h28" stroke="#777" stroke-width=".8"/>
          <path d="M407 17h18l-9 15z" fill="#333"/>
          <rect x="434" y="10" width="29" height="28" fill="#8eb0e0" stroke="#3c67a8" stroke-width="1.500"/><path d="M448 10v28M434 24h29" stroke="#3c67a8" stroke-width="2"/>
          <path d="M469 17h18l-9 15z" fill="#333"/>
        </svg>
      </div>
    </section>

    <footer class="timeline">
      <div class="tl-scroll"></div>
      <div class="tl-row">
        <svg class="tl-ctrl" viewBox="0 0 226 30"><path d="M0 0h3v30H0zM4 15L24 0V30ZM49 15L61 2V28ZM62 8h5v14h-5zM100 0L125 15 100 30ZM148 8h5v14h-5zM154 2L167 15 154 28ZM200 0L220 15 200 30ZM222 0h3v30h-3z" fill="#4c4c4c"/></svg>
        <div class="tl-seq">
          <div class="tl-items">
            <div class="ti"><svg class="ti-b"><use href="#t-b"/></svg><i></i></div><div class="ti"><svg class="ti-b"><use href="#t-b"/></svg><i></i></div><div class="ti"><svg class="ti-b"><use href="#t-b"/></svg><i></i></div><div class="ti"><svg class="ti-b"><use href="#t-b"/></svg><i></i></div><div class="ti"><svg class="ti-b"><use href="#t-b"/></svg><i></i></div>
            <div class="ti"><svg><use href="#t-s"/></svg><i></i></div><div class="ti"><svg><use href="#t-e"/></svg><i></i></div><div class="ti"><svg><use href="#t-s"/></svg><i></i></div><div class="ti"><svg><use href="#t-e"/></svg><i></i></div><div class="ti"><svg><use href="#t-s"/></svg><i></i></div><div class="ti"><svg><use href="#t-e"/></svg><i></i></div><div class="ti"><svg><use href="#t-s"/></svg><i></i></div><div class="ti"><svg><use href="#t-e"/></svg><i></i></div><div class="ti"><svg><use href="#t-s"/></svg><i></i></div><div class="ti"><svg><use href="#t-e"/></svg><i></i></div><div class="ti"><svg><use href="#t-s"/></svg><i></i></div><div class="ti"><svg><use href="#t-e"/></svg><i></i></div><div class="ti"><svg><use href="#t-s"/></svg><i></i></div><div class="ti"><svg><use href="#t-e"/></svg><i></i></div><div class="ti"><svg><use href="#t-s"/></svg><i></i></div>
            <div class="ti"><svg><use href="#t-s"/></svg><i></i></div><div class="ti"><svg><use href="#t-e"/></svg><i></i></div><div class="ti"><svg><use href="#t-s"/></svg><i></i></div><div class="ti"><svg><use href="#t-e"/></svg><i></i></div><div class="ti"><svg><use href="#t-s"/></svg><i></i></div><div class="ti"><svg><use href="#t-s"/></svg><i></i></div><div class="ti"><svg><use href="#t-e"/></svg><i></i></div><div class="ti"><svg><use href="#t-s"/></svg><i></i></div><div class="ti"><svg><use href="#t-e"/></svg><i></i></div><div class="ti"><svg><use href="#t-s"/></svg><i></i></div>
            <div class="ti"><svg><use href="#t-s"/></svg><i></i></div><div class="ti"><svg><use href="#t-e"/></svg><i></i></div><div class="ti"><svg><use href="#t-s"/></svg><i></i></div><div class="ti"><svg><use href="#t-e"/></svg><i></i></div><div class="ti"><svg><use href="#t-s"/></svg><i></i></div><div class="ti"><svg><use href="#t-e"/></svg><i></i></div><div class="ti"><svg><use href="#t-s"/></svg><i></i></div><div class="ti"><svg><use href="#t-s"/></svg><i></i></div><div class="ti"><svg><use href="#t-e"/></svg><i></i></div><div class="ti"><svg><use href="#t-s"/></svg><i></i></div>
            <div class="ti"><svg><use href="#t-s"/></svg><i></i></div><div class="ti"><svg><use href="#t-e"/></svg><i></i></div><div class="ti"><svg><use href="#t-s"/></svg><i></i></div><div class="ti"><svg><use href="#t-e"/></svg><i></i></div><div class="ti"><svg><use href="#t-s"/></svg><i></i></div><div class="ti"><svg><use href="#t-e"/></svg><i></i></div><div class="ti"><svg><use href="#t-s"/></svg><i></i></div><div class="ti"><svg><use href="#t-s"/></svg><i></i></div><div class="ti"><svg><use href="#t-e"/></svg><i></i></div><div class="ti"><svg><use href="#t-s"/></svg><i></i></div>
            <div class="ti"><svg><use href="#t-s"/></svg><i></i></div><div class="ti"><svg><use href="#t-e"/></svg><i></i></div><div class="ti"><svg><use href="#t-s"/></svg><i></i></div><div class="ti"><svg><use href="#t-s"/></svg><i></i></div><div class="ti"><svg><use href="#t-e"/></svg><i></i></div><div class="ti"><svg><use href="#t-s"/></svg><i></i></div><div class="ti"><svg><use href="#t-s"/></svg><i></i></div><div class="ti"><svg><use href="#t-e"/></svg><i></i></div><div class="ti"><svg><use href="#t-s"/></svg><i></i></div><div class="ti"><svg><use href="#t-e"/></svg><i></i></div>
          </div>
          <div class="tl-rail"></div>
        </div>
        <svg class="tl-gear" viewBox="0 0 32 32"><use href="#b-gear"/></svg>
      </div>
    </footer>
  </main>
</div>
</div>
</body>
</html>
```
FILE: styles.css
```css
* { box-sizing: border-box; }
html, body { margin: 0; padding: 0; }
body {
  width: 3360px; height: 2100px; overflow: hidden;
  font-family: "Liberation Sans", Arial, sans-serif;
  background:
    radial-gradient(ellipse 14px 26px at 1690px 2100px, #1c1718 0, #1c1718 40%, transparent 100%),
    radial-gradient(ellipse 500px 40px at 700px 2095px, #5e4d50 0, transparent 100%),
    radial-gradient(ellipse 500px 40px at 2500px 2095px, #8f7f88 0, transparent 100%),
    #7a686d;
}
.defs { position: absolute; width: 0; height: 0; }

.screen { display: flex; flex-direction: column; width: 3360px; height: 2100px; }

/* menu bar */
.menubar {
  display: flex; align-items: center; height: 44px; flex: none;
  padding: 0 45px 0 42px; color: #fff;
  background: linear-gradient(90deg, #2a292d, #2f2c2f 40%, #3b3134);
}
.apple { width: 26px; height: 32px; margin-top: -4px; }
.menus { display: flex; gap: 36.500px; margin-left: 40px; font-size: 29px; }
.menu-app { font-weight: 700; margin-right: 3px; }
.status { display: flex; align-items: center; margin-left: auto; }
.status svg { flex: none; }
.st-mc { width: 30px; height: 36px; margin-left: -4px; }
.st-air { width: 38px; height: 34px; margin-left: 28px; }
.st-wifi { width: 42px; height: 32px; margin-left: 21px; }
.st-pct { font-size: 24px; margin-left: 20px; }
.st-bat { width: 46px; height: 28px; margin-left: 9px; }
.st-time { font-size: 28px; margin-left: 35px; }
.st-user { font-size: 29px; margin-left: 29px; }
.st-search { width: 30px; height: 34px; margin-left: 31px; }
.st-siri { width: 32px; height: 32px; margin-left: 34px; }
.st-list { width: 38px; height: 26px; margin-left: 23px; }

.desk { display: flex; flex: 1; min-height: 0; }

/* dock */
.dock {
  flex: none; width: 66px; height: 1994px; margin-top: 31px; margin-right: 4px;
  display: flex; flex-direction: column; align-items: center;
  padding: 6px 0 0 8px;
  background: #6f6065; border-top: 2px solid #5a4d52; border-right: 2px solid #5a4d52;
  border-bottom: 2px solid #5a4d52; border-radius: 0 8px 8px 0;
}
.di { position: relative; flex: none; width: 44px; height: 49.600px; display: flex; align-items: center; justify-content: center; }
.di svg { width: 42px; height: 42px; display: block; }
.di-lg svg { width: 47px; height: 47px; }
.dot { position: absolute; left: -29px; top: 22px; width: 6px; height: 6px; border-radius: 50%; background: #e8e4e6; }
.dock-sep { flex: none; width: 46px; height: 2px; margin: 11px 0 9px; background: #a99ca0; }
.d-cal { font: 24px "Liberation Sans", sans-serif; fill: #222; }
.d-term { font: 13px "Liberation Mono", monospace; fill: #9fd89f; }
.d-word { font: 700 24px "Liberation Sans", sans-serif; fill: #fff; }
.d-wordsm { font: 700 13px "Liberation Sans", sans-serif; fill: #fff; }

/* window */
.window {
  flex: none; width: 3266px; height: 2036px; margin-top: 2px;
  display: flex; flex-direction: column; overflow: hidden;
  border-radius: 10px; background: #f3f3f3;
}
.titlebar {
  position: relative; flex: none; height: 42px;
  display: flex; align-items: center; justify-content: center;
  background: linear-gradient(#e6e6e6, #c9c9c9);
}
.title { font-size: 27px; color: #3f3f3f; margin: 2px 4px 0 0; }
.lights { position: absolute; left: 16px; top: 10px; display: flex; gap: 15px; }
.lights i { width: 25px; height: 25px; border-radius: 50%; }
.l-r { background: #ee6a5e; } .l-y { background: #f5bd4f; } .l-g { background: #61c454; }

.tabbar {
  flex: none; height: 65px; display: flex; align-items: flex-end;
  background: linear-gradient(#cdcdcd, #c5c5c5 10px);
}
.tools-left { flex: none; width: 393px; height: 55px; }
.doc-tab {
  flex: none; width: 2402px; height: 55px; display: flex; align-items: center;
  padding-left: 1096px; padding-right: 14px;
  background: #f4f4f4; border-radius: 10px 10px 0 0;
}
.tab-cube { width: 33px; height: 34px; margin-right: 9px; }
.tab-name { font-size: 26px; color: #2e2e2e; }
.tab-x { width: 20px; height: 20px; margin-left: auto; margin-top: 2px; }
.tab-plus {
  flex: none; width: 55px; height: 55px; margin-left: 8px; display: flex; align-items: center; justify-content: center;
  background: #d2d2d2;
}
.tab-plus svg { width: 26px; height: 26px; }
.tb-ico { flex: none; width: 32px; height: 32px; align-self: flex-end; margin-bottom: 15px; }
.tb-wrench { margin-left: 24px; }
.tb-clock { margin-left: 34px; }
.tb-user { font-size: 24px; color: #333; margin-left: 48px; margin-bottom: 17px; }
.tb-help { margin-left: 49px; }
.help-q { font: 700 26px "Liberation Sans", sans-serif; fill: #ccc; text-anchor: middle; }

/* ribbon */
.ribbon {
  flex: none; height: 165px; display: flex;
  background: #f4f4f4; border-bottom: 5px solid #e2e2e2;
}
.design {
  flex: none; width: 209px; height: 121px; margin: 22px 5px 0 23px;
  display: flex; align-items: center; justify-content: center;
  border: 2px solid #dcdcdc; border-bottom-color: #cfcfcf; border-radius: 5px; background: #f4f4f4;
}
.caret-label {
  display: inline-flex; align-items: center; gap: 5px;
  font-size: 21px; line-height: 22px; color: #333; letter-spacing: -.3px;
}
.caret-label::after {
  content: ""; width: 0; height: 0;
  border-top: 15px solid #2e2e2e; border-left: 9px solid transparent; border-right: 9px solid transparent;
}
.design .caret-label { font-size: 22px; margin-left: 4px; }
.rib-main { flex: 1; display: flex; flex-direction: column; min-width: 0; }
.rib-tabs { flex: none; height: 50px; display: flex; align-items: flex-end; padding: 0 0 5px 28px; }
.rtab { font-size: 21px; letter-spacing: -.3px; color: #333; height: 33px; line-height: 22px; text-align: center; }
.rtab-active { width: 112px; font-size: 22px; color: #1188cf; border-bottom: 7px solid #0f8fd6; }
.rtab-surface { margin-left: 68px; }
.rtab-sheet { margin-left: 90px; }
.rtab-tools { margin-left: 92px; }

.rib-groups { flex: none; height: 110px; display: flex; }
.grp {
  flex: none; display: flex; flex-direction: column; align-items: center;
  padding-top: 5px; border-left: 2px solid #e0e0e0;
}
.g-create { width: 539px; border-left: 0; }
.g-modify { width: 623px; }
.g-assemble { width: 195px; padding-left: 3px; }
.g-construct { width: 207px; padding-left: 3px; }
.g-inspect { width: 159px; padding-left: 10px; }
.g-insert { width: 147px; padding-left: 8px; }
.g-select { width: 149px; padding-left: 5px; }
.g-position { width: 204px; padding-right: 10px; }
.g-icons { display: flex; gap: 22px; height: 64px; margin-bottom: 13px; align-items: flex-start; }
.g-icons svg { width: 64px; height: 64px; flex: none; }
.g-icons .ic-insp { width: 58px; height: 34px; margin-top: 15px; margin-right: 8px; }
.g-icons .ic-ins { width: 58px; height: 58px; margin-top: 2px; margin-right: 6px; }
.g-icons .ic-sel { width: 78px; height: 76px; margin-top: -6px; }
.g-pos { gap: 22px; margin-left: 4px; }
.fx {
  flex: none; width: 64px; height: 64px; padding-left: 8px; white-space: nowrap;
  font: italic 66px/52px "Liberation Serif", serif; letter-spacing: 4px; color: #666;
}

/* viewport */
.viewport {
  position: relative; flex: 1; min-height: 0;
  background: linear-gradient(90deg, #f4f4f4, #fff 26px);
}
.canvas { position: absolute; left: 0; top: 0; width: 3266px; height: 1665px; }
.body { stroke: #4a4a45; stroke-width: 1.500; }
.strip { fill: #7d7e7a; }
.edge { fill: none; stroke: #33332f; stroke-width: 1.500; }
.sq { fill: #7d7e7a; stroke: #3a3a36; stroke-width: 1.500; }
.slots rect { stroke: #3a3a36; stroke-width: 1.500; }
.cube-mid { filter: blur(2px); }
.cube-t { font: 700 26px "Liberation Sans", sans-serif; fill: #5a5a5a; }
.cube-y { font: 700 26px "Liberation Sans", sans-serif; fill: #49e049; }
.cube-z { font: 700 30px "Liberation Sans", sans-serif; fill: #1c1ce0; }

.panel { position: absolute; left: 8px; width: 599px; }
.browser { top: 8px; }
.comments { bottom: 11px; }
.panel-head {
  display: flex; align-items: center; height: 49px; padding-left: 10px;
  background: linear-gradient(#f8f8f8, #efefef);
  border: 1px solid #dadada; border-bottom: 3px solid #cfcfcf;
}
.ph-arrows { width: 20px; height: 14px; margin-right: 20px; }
.ph-title { font-size: 19.500px; color: #555; padding-top: 2px; }
.ph-comments { font-size: 21px; margin-left: 40px; letter-spacing: -.2px; }
.ph-btn { width: 18px; height: 18px; margin-left: auto; margin-right: 15px; }
.ph-bar { width: 2px; height: 24px; margin-right: 5px; background: #999; }

.tree { list-style: none; margin: 0; padding: 7px 0 0; }
.row { display: flex; align-items: center; height: 48px; }
.d0 { padding-left: 37px; }
.d1 { padding-left: 72px; }
.d2 { padding-left: 144px; }
.tw { flex: none; }
.d0 .tw { margin-right: 20px; }
.tw-o { width: 15px; height: 15px; margin-right: 21px; }
.tw-c { width: 14px; height: 22px; margin-right: 22px; }
.tw-b { width: 20px; height: 28px; margin-right: 16px; }
.pill {
  display: flex; align-items: center; height: 40px; padding: 0 18px 0 6px; background: #f3f3f3;
}
.pill-long { width: 485px; padding-right: 0; white-space: nowrap; }
.pill-root { width: 304px; padding-right: 0; }
.pill-units { padding-left: 8px; }
.ic { flex: none; width: 32px; height: 22px; margin-right: 17px; }
.ic-tall { height: 32px; }
.ic-unit { flex: none; width: 28px; height: 34px; margin-right: 19px; }
.t { font: 21px "DejaVu Sans", sans-serif; color: #3f3f3f; margin-left: 11px; }
.sel {
  display: flex; align-items: center; width: 204px; height: 31px; margin-left: -5px; background: #8c8c8c; padding-left: 7px;
}
.sel-ic { width: 30px; height: 30px; }
.sel span { font: 21px "DejaVu Sans", sans-serif; color: #fff; margin-left: 28px; white-space: nowrap; }
.radio { width: 28px; height: 28px; margin-left: 9px; }

.navbar { position: absolute; left: 1381px; bottom: 10px; width: 503px; height: 46px; background: #efefef; }
.navbar svg { display: block; width: 503px; height: 46px; }

/* timeline */
.timeline {
  flex: none; height: 99px; padding-left: 8px; background: #f3f3f3; border-top: 3px solid #cfcfcf;
}
.tl-scroll { width: 568px; height: 15px; border-radius: 8px; background: #c9c9c9; }
.tl-row { display: flex; margin-top: 15px; }
.tl-ctrl { flex: none; width: 226px; height: 30px; margin: 9px 44px 0 14px; }
.tl-seq { flex: none; }
.tl-items { display: flex; gap: 18px; }
.ti { flex: none; width: 30px; display: flex; flex-direction: column; align-items: center; }
.ti svg { width: 30px; height: 32px; display: block; }
.ti .ti-b { width: 32px; flex: none; }
.ti i { width: 2px; height: 12px; margin-top: 6px; background: #c6c6c6; }
.tl-rail { width: 2842px; height: 3px; margin: -1px 0 0 15px; background: #c8c8c8; }
.tl-gear { flex: none; width: 33px; height: 32px; margin: 8px 0 0 54px; }
```
